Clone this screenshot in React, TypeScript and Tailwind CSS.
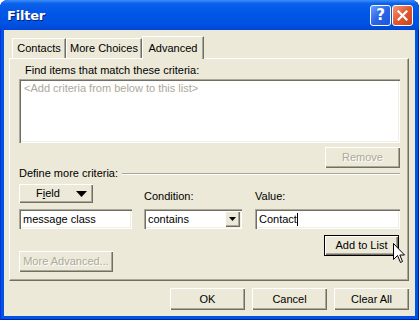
import React from 'react';

const FONT = "font-['Tahoma','Liberation_Sans',sans-serif] text-[11px] leading-[13px]";
const RAISED =
  'bg-[#ece9d8] shadow-[inset_1px_1px_0_#ffffff,inset_-1px_-1px_0_#716f64,inset_-2px_-2px_0_#aca899]';
const SUNKEN =
  'bg-white shadow-[inset_1px_1px_0_#aca899,inset_2px_2px_0_#716f64,inset_-1px_-1px_0_#ffffff,inset_-2px_-2px_0_#f1efe2]';

const Button: React.FC<{ label: string; disabled?: boolean; h?: string }> = ({ label, disabled, h = 'h-[21px]' }) => (
  <div
    className={`${RAISED} ${h} w-full flex items-center justify-center ${
      disabled ? 'text-[#aca899] [text-shadow:1px_1px_0_#ffffff]' : 'text-black'
    }`}
  >
    {label}
  </div>
);

const Tab: React.FC<{ label: string; active?: boolean; w: string }> = ({ label, active, w }) => (
  <div
    className={`${w} flex items-center justify-center bg-[#ece9d8] border-l border-t border-white border-r border-r-[#716f64] shadow-[inset_-1px_0_0_#aca899] ${
      active ? 'h-[23px] relative z-10 -mb-[1px]' : 'h-[20px]'
    }`}
  >
    {label}
  </div>
);

const Cursor = () => (
  <svg width="13" height="21" viewBox="0 0 13 21" className="absolute left-[393px] top-[243px]">
    <path
      d="M0.5 0.5 L0.5 16.5 L4.5 12.5 L7.5 19.5 L9.5 18.5 L6.8 12 L11.5 12 Z"
      fill="#ffffff"
      stroke="#000000"
      strokeWidth="1"
    />
  </svg>
);

export default function App() {
  return (
    <div className={`relative w-[419px] h-[320px] overflow-hidden ${FONT} text-black`}>
      <div className="w-full h-full flex flex-col rounded-t-[8px] bg-[#0054e3] shadow-[inset_1px_0_0_#0831d9,inset_-1px_0_0_#001ea0,inset_0_-1px_0_#001ea0]">
        {/* Title bar */}
        <div className="h-[30px] shrink-0 flex items-center pl-[7px] pr-[6px] rounded-t-[8px] bg-[linear-gradient(to_bottom,#3d8ff8_0%,#0b61ea_12%,#0056e6_45%,#0052e2_80%,#0046d5_100%)]">
          <span className="font-['DejaVu_Sans',sans-serif] font-bold text-[13px] text-white [text-shadow:1px_1px_0_#0a1e72] tracking-[-0.2px]">
            Filter
          </span>
          <div className="ml-auto flex gap-[1px]">
            <div className="w-[21px] h-[21px] rounded-[3px] border border-white bg-[linear-gradient(135deg,#6aa0fa,#2a64e8_50%,#1d55d8)] flex items-center justify-center">
              <span className="font-['DejaVu_Sans',sans-serif] font-bold text-[15px] leading-none text-white">?</span>
            </div>
            <div className="w-[21px] h-[21px] rounded-[3px] border border-white bg-[linear-gradient(135deg,#f29a7a,#e2582d_50%,#c9441d)] flex items-center justify-center">
              <svg width="11" height="11" viewBox="0 0 11 11">
                <path d="M1.5 1.5 L9.5 9.5 M9.5 1.5 L1.5 9.5" stroke="#ffffff" strokeWidth="2.2" strokeLinecap="square" />
              </svg>
            </div>
          </div>
        </div>

        {/* Body */}
        <div className="flex-1 mx-[4px] mb-[4px] bg-[#ece9d8] pl-[5px] pr-[6px] pt-[5px] flex flex-col">
          {/* Tabs */}
          <div className="flex items-end pl-[3px] h-[23px]">
            <Tab label="Contacts" w="w-[54px]" />
            <Tab label="More Choices" w="w-[76px]" />
            <Tab label="Advanced" w="w-[62px]" active />
          </div>

          {/* Tab panel */}
          <div className="h-[223px] border-l border-t border-white border-r border-r-[#716f64] border-b border-b-[#716f64] shadow-[inset_-1px_-1px_0_#aca899] pl-[9px] pr-[8px]">
            <div className="pl-[6px] pt-[5px]">Find items that match these criteria:</div>
            <div className={`${SUNKEN} mt-[2px] h-[64px] px-[5px] pt-[3px] text-[#aca899]`}>
              &lt;Add criteria from below to this list&gt;
            </div>
            <div className="flex justify-end mt-[4px]">
              <div className="w-[75px]">
                <Button label="Remove" disabled />
              </div>
            </div>

            <div className="flex items-center -mt-[1px]">
              <span>Define more criteria:</span>
              <div className="flex-1 ml-[4px] mt-[1px] h-[2px] border-t border-[#aca899] border-b border-b-white" />
            </div>

            <div className="flex items-end mt-[4px]">
              <div className="w-[113px]">
                <div className={`${RAISED} w-[74px] h-[19px] flex items-center pl-[17px]`}>
                  <span>
                    F<span className="underline">i</span>eld
                  </span>
                  <svg width="11" height="6" viewBox="0 0 11 6" className="ml-[16px]">
                    <path d="M0 0 H11 L5.5 6 Z" fill="#000000" />
                  </svg>
                </div>
              </div>
              <div className="w-[98px] ml-[12px]">Condition:</div>
              <div className="w-[145px] ml-[13px]">Value:</div>
            </div>

            <div className="flex mt-[6px]">
              <div className={`${SUNKEN} w-[113px] h-[20px] pl-[4px] flex items-center`}>message class</div>
              <div className={`${SUNKEN} w-[98px] h-[20px] ml-[12px] pl-[4px] pr-[2px] flex items-center`}>
                <span className="flex-1">contains</span>
                <div className={`${RAISED} w-[15px] h-[16px] flex items-center justify-center`}>
                  <svg width="7" height="4" viewBox="0 0 7 4">
                    <path d="M0 0 H7 L3.5 4 Z" fill="#000000" />
                  </svg>
                </div>
              </div>
              <div className={`${SUNKEN} w-[145px] h-[20px] ml-[13px] pl-[4px] flex items-center`}>
                Contact<span className="inline-block w-[1px] h-[13px] bg-black" />
              </div>
            </div>

            <div className="flex justify-between items-start mt-[6px]">
              <div className="w-[94px] mt-[16px]">
                <Button label="More Advanced..." disabled />
              </div>
              <div className="w-[75px] h-[21px] border border-black mr-[1px]">
                <Button label="Add to List" h="h-[19px]" />
              </div>
            </div>
          </div>

          {/* Footer buttons */}
          <div className="flex justify-end gap-[7px] mt-[7px]">
            <div className="w-[75px]">
              <Button label="OK" h="h-[22px]" />
            </div>
            <div className="w-[75px]">
              <Button label="Cancel" h="h-[22px]" />
            </div>
            <div className="w-[75px]">
              <Button label="Clear All" h="h-[22px]" />
            </div>
          </div>
        </div>
      </div>
      <Cursor />
    </div>
  );
}
